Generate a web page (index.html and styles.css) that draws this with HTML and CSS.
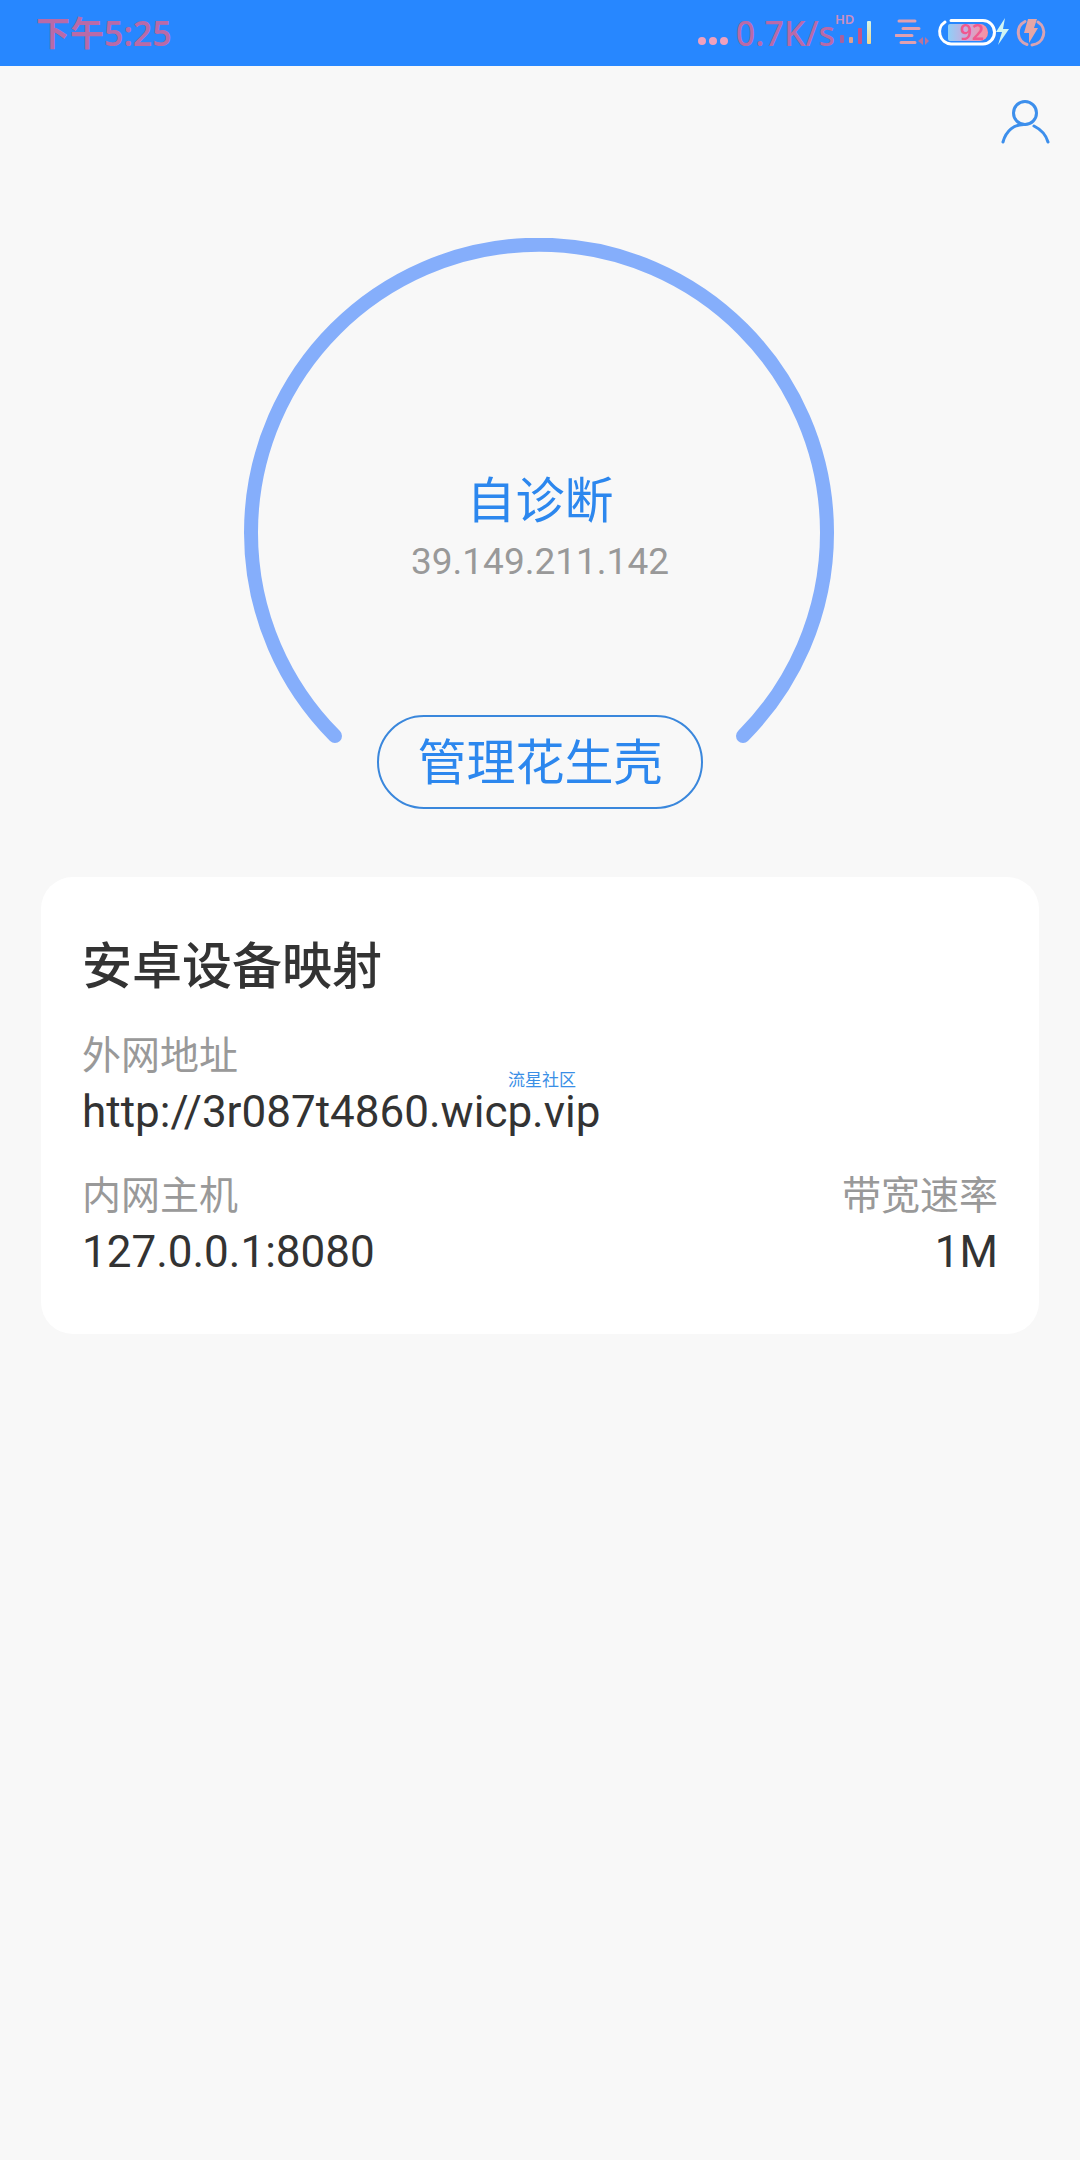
FILE: index.html
```html
<!DOCTYPE html>
<html lang="zh-CN">
<head>
  <meta charset="utf-8">
  <meta name="viewport" content="width=device-width, initial-scale=1">
  <title>花生壳</title>
  <link rel="stylesheet" href="styles.css">
</head>
<body>
  <div class="status-bar">
    <span class="status-text clock">下午5:25</span>
    <div class="status-icons">
      <svg class="icon-dots" width="30" height="66" viewBox="0 0 30 66" aria-hidden="true">
        <g fill="#f0a0bd"><circle cx="4" cy="41" r="4"/><circle cx="15" cy="41" r="4"/><circle cx="26" cy="41" r="4"/></g>
      </svg>
      <span class="status-text">0.7K/s</span>
      <span class="signal">
        <span class="signal-tag">HD</span>
        <svg width="40" height="66" viewBox="0 0 40 66" aria-hidden="true">
          <defs>
            <linearGradient id="bar" x1="0" y1="0" x2="0" y2="1"><stop offset="0" stop-color="#d2f5ea"/><stop offset="1" stop-color="#f2d98c"/></linearGradient>
          </defs>
          <rect x="5" y="35" width="4" height="8" rx="1" fill="#a8609f"/>
          <rect x="14" y="37" width="4" height="6" rx="1" fill="#e0a08c"/>
          <rect x="23" y="28" width="4" height="16" rx="1" fill="#c4558a"/>
          <rect x="32" y="21" width="4" height="23" rx="1" fill="url(#bar)"/>
        </svg>
      </span>
      <svg class="icon-lines" width="34" height="66" viewBox="0 0 34 66" aria-hidden="true">
        <g stroke="#e0a0b0" stroke-width="3" stroke-linecap="round" fill="none">
          <path d="M4 21H20M8 28.500H24M1 35.500H17M6 42.500H20"/>
        </g>
        <path d="M28 37v8l-5-4ZM30 45v-8l4 4Z" fill="#b9749c"/>
      </svg>
      <span class="battery">
        <svg width="74" height="66" viewBox="0 0 74 66" aria-hidden="true">
          <defs>
            <linearGradient id="charge"><stop offset="0" stop-color="#8fd0f8"/><stop offset=".4" stop-color="#c3aee0"/><stop offset="1" stop-color="#ff8e9c"/></linearGradient>
          </defs>
          <path d="M13 24H43a8 8.500 0 0 1 0 17H13a2 2 0 0 1-2-2V26a2 2 0 0 1 2-2Z" fill="url(#charge)"/>
          <path d="M14 20.500H46a11.500 11.750 0 0 1 0 23.500H14A12 12 0 0 1 8 22" fill="none" stroke="#fff" stroke-width="3" stroke-linecap="round"/>
          <path d="M68 18 59 32H65L61 45 72 29H66Z" fill="#d0f5f2"/>
        </svg>
        <span class="battery-level">92</span>
      </span>
      <svg class="icon-charge" width="30" height="66" viewBox="0 0 30 66" aria-hidden="true">
        <path d="M9 21.500A12.500 12.500 0 0 0 11 44.500M22 22A12.500 12.500 0 0 1 16 45" fill="none" stroke="#d8a3b3" stroke-width="3" stroke-linecap="round"/>
        <path d="M12 19H21L18 28H22L13 43V33H8Z" fill="#e5a6a6"/>
      </svg>
    </div>
  </div>

  <header class="top-bar">
    <button class="profile" type="button" aria-label="个人中心">
      <svg width="52" height="52" viewBox="0 0 52 52" fill="none" stroke="#3d8fec" stroke-width="3" stroke-linecap="round" aria-hidden="true">
        <circle cx="27" cy="19" r="11.500"/>
        <path d="M5 48C8 37 16 30 27 30.500M36 32C43 35.500 48 41 50 48"/>
      </svg>
    </button>
  </header>

  <main>
    <section class="gauge">
      <svg class="gauge-ring" width="592" height="508" viewBox="0 0 592 508" aria-hidden="true">
        <path d="M91 498A288 288 0 1 1 499 498" fill="none" stroke="#85aefb" stroke-width="14" stroke-linecap="round"/>
      </svg>
      <div class="readout">
        <a class="diagnose" href="#diagnose">自诊断</a>
        <span class="ip">39.149.211.142</span>
      </div>
      <button class="manage" type="button">管理花生壳</button>
    </section>

    <section class="card">
      <h2 class="card-title">安卓设备映射</h2>
      <dl class="fields">
        <div class="field field-wide">
          <dt>外网地址</dt>
          <dd>http://3r087t4860.wicp.vip</dd>
        </div>
        <div class="field">
          <dt>内网主机</dt>
          <dd>127.0.0.1:8080</dd>
        </div>
        <div class="field field-end">
          <dt>带宽速率</dt>
          <dd>1M</dd>
        </div>
      </dl>
      <span class="watermark">流星社区</span>
    </section>
  </main>
</body>
</html>
```
FILE: styles.css
```css
* {
  box-sizing: border-box;
}

body {
  margin: 0;
  min-height: 100vh;
  background: #f8f8f8;
  color: #333;
  font-family: Roboto, "Noto Sans CJK SC", sans-serif;
}

svg {
  display: block;
}

button {
  padding: 0;
  border: 0;
  background: none;
  font: inherit;
  cursor: pointer;
}

.status-bar {
  display: flex;
  justify-content: space-between;
  height: 66px;
  padding: 0 34px 0 36px;
  background: #2787ff;
}

.status-text {
  color: #b96aa8;
  font: 500 34px/66px "Noto Sans", "Noto Sans CJK SC", sans-serif;
}

.clock {
  font-weight: 600;
}

.status-icons {
  display: flex;
}

.icon-dots {
  margin-right: 8px;
}

.signal,
.battery {
  position: relative;
}

.signal-tag {
  position: absolute;
  top: 11px;
  left: 0;
  color: #c98fc0;
  font: 600 13px/16px "Noto Sans", sans-serif;
}

.icon-lines {
  margin: 0 8px 0 20px;
}

.battery-level {
  position: absolute;
  top: 20px;
  left: 23px;
  color: #f0588f;
  font: 600 21px/24px "Noto Sans", sans-serif;
}

.icon-charge {
  margin-left: 5px;
}

.top-bar {
  display: flex;
  justify-content: flex-end;
  padding: 28px 30px;
}

.gauge {
  display: grid;
  justify-items: center;
  height: 571px;
  margin-top: 64px;
}

.gauge > * {
  grid-area: 1 / 1;
}

.readout {
  display: flex;
  flex-direction: column;
  align-items: center;
  padding-top: 234px;
  line-height: 60px;
}

.diagnose {
  color: #2c87ee;
  font-size: 49px;
  text-decoration: none;
}

.ip {
  color: #999;
  font-size: 37px;
}

.manage {
  align-self: end;
  height: 94px;
  padding: 0 38px 8px;
  border: 2px solid #3a87dc;
  border-radius: 47px;
  color: #2c87ee;
  font-size: 49px;
}

.card {
  position: relative;
  margin: 68px 41px 0;
  padding: 58px 41px 52px;
  border-radius: 32px;
  background: #fff;
}

.card-title {
  margin: 0 0 31px;
  font-size: 50px;
  font-weight: 500;
  line-height: 64px;
}

.fields {
  display: grid;
  grid-template-columns: 1fr auto;
  row-gap: 28px;
  margin: 0;
}

.field-wide {
  grid-column: 1 / -1;
}

.field-end {
  text-align: right;
}

.field dt {
  color: #999;
  font-size: 39px;
  line-height: 52px;
}

.field dd {
  margin: 0;
  font-size: 44px;
  line-height: 60px;
}

.watermark {
  position: absolute;
  top: 193px;
  left: 467px;
  color: #3a8fe6;
  font-size: 17px;
  line-height: 20px;
}
```
